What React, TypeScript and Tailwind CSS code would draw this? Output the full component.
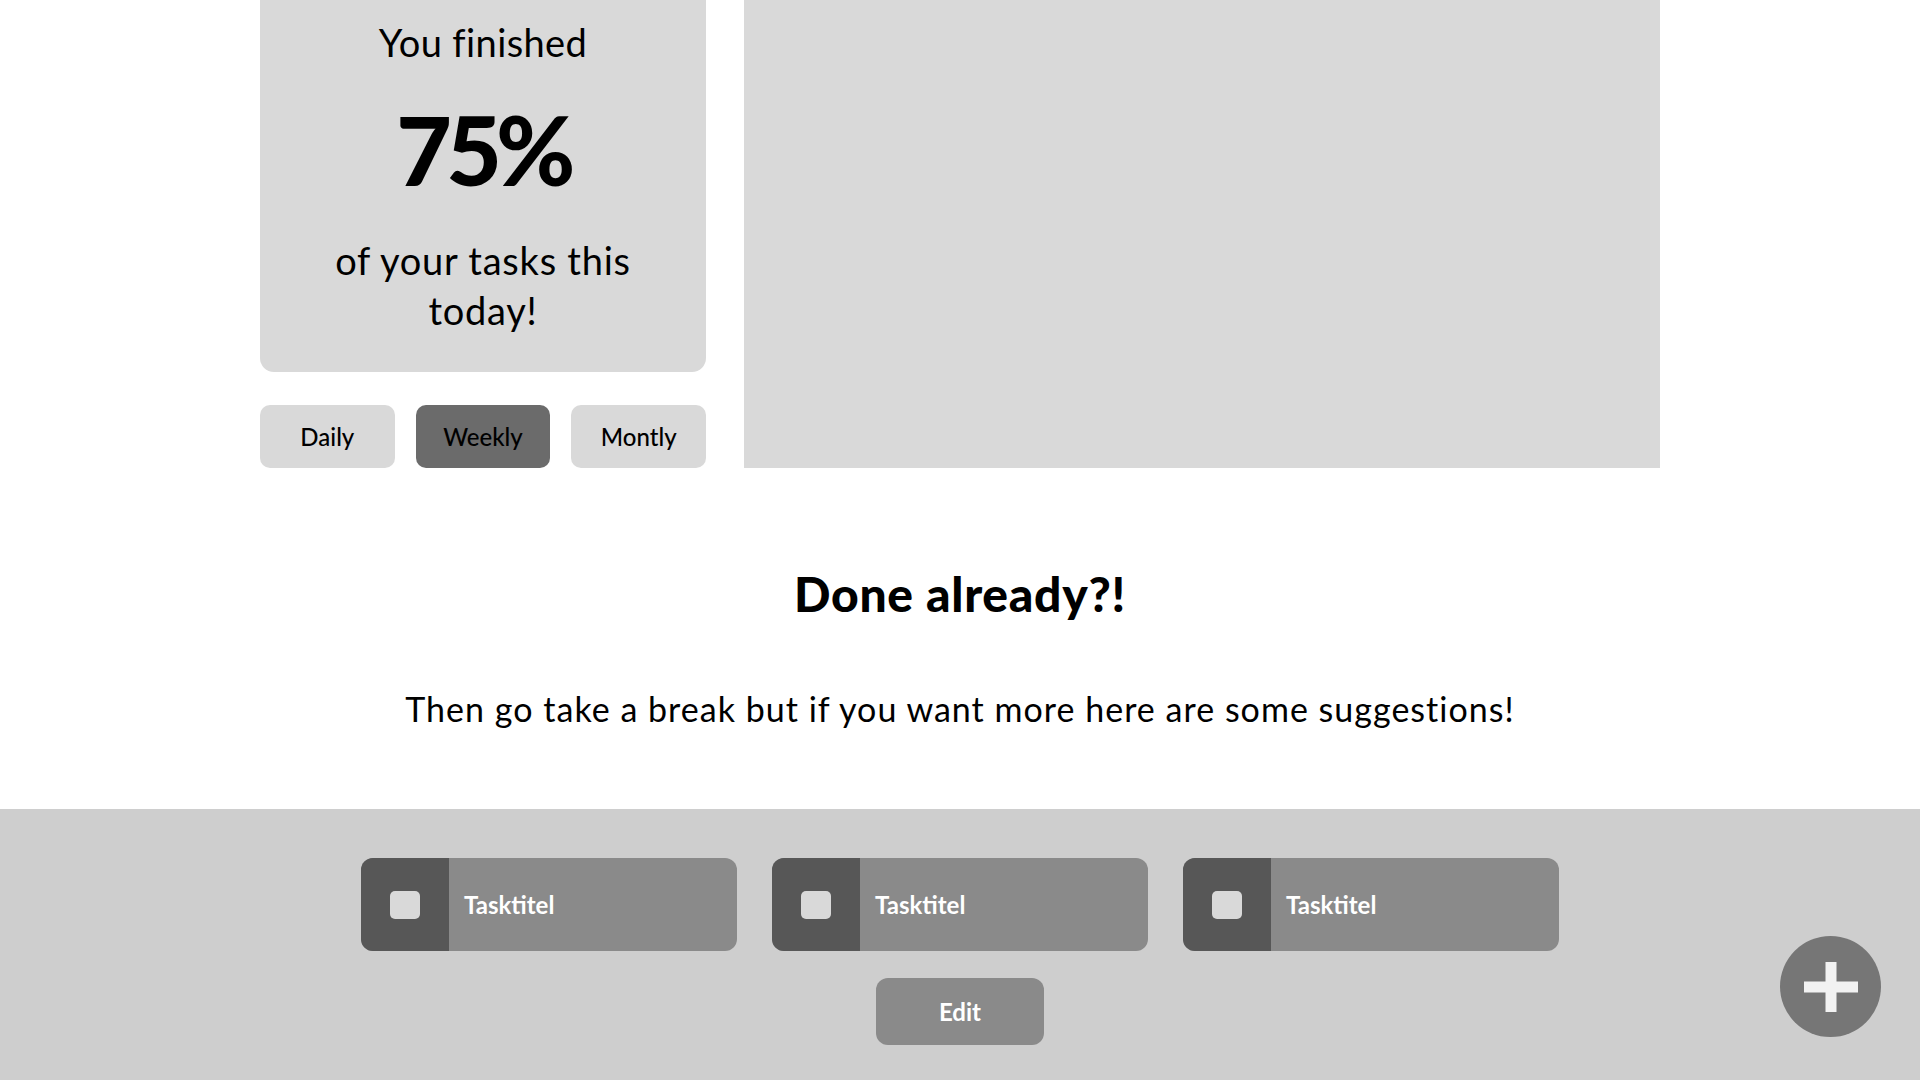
import { useState } from 'react';

type Range = 'Daily' | 'Weekly' | 'Montly';

const RANGES: Range[] = ['Daily', 'Weekly', 'Montly'];

const SUGGESTIONS = [
  { id: 1, title: 'Tasktitel' },
  { id: 2, title: 'Tasktitel' },
  { id: 3, title: 'Tasktitel' }
];

function TaskCard({ title }: { title: string }) {
  return (
    <div className="flex h-[93px] w-[376px] overflow-hidden rounded-[12px] bg-[#8a8a8a]">
      <div className="flex w-[88px] items-center justify-center bg-[#575757]">
        <div className="h-[28px] w-[30px] rounded-[5px] bg-[#d9d9d9]" />
      </div>
      <div className="flex flex-1 items-center pl-[15px] text-[24px] font-bold leading-none text-white">{title}</div>
    </div>
  );
}

export default function App() {
  const [range, setRange] = useState<Range>('Weekly');

  return (
    <div className="relative flex h-[1080px] w-full flex-col overflow-hidden bg-white font-['Lato',sans-serif] text-black">
      <div className="mx-auto flex w-[1400px] gap-[38px]">
        <div className="flex w-[446px] flex-col gap-[33px]">
          <div className="flex h-[372px] flex-col items-center rounded-b-[14px] bg-[#d9d9d9] pt-[18px] text-center">
            <p className="text-[38px] leading-[48px] tracking-[0.01em]">You finished</p>
            <p className="mt-[35px] text-[96px] font-black leading-none tracking-[-0.06em]">75%</p>
            <p className="mt-[38px] w-[340px] text-[38px] leading-[50px] tracking-[0.02em]">of your tasks this today!</p>
          </div>
          <div className="flex gap-[21px]">
            {RANGES.map((r) => (
              <button
                key={r}
                onClick={() => setRange(r)}
                className={
                  'h-[63px] flex-1 rounded-[10px] text-[24px] font-medium ' +
                  (r === range ? 'bg-[#6b6b6b]' : 'bg-[#d9d9d9]')
                }
              >
                {r}
              </button>
            ))}
          </div>
        </div>
        <div className="h-[468px] flex-1 bg-[#d9d9d9]" />
      </div>

      <h2 className="mt-[102px] text-center text-[48px] font-black leading-none tracking-[0.015em]">Done already?!</h2>
      <p className="mt-[74px] text-center text-[34px] leading-none tracking-[0.03em]">
        Then go take a break but if you want more here are some suggestions!
      </p>

      <div className="mt-auto flex h-[271px] flex-col items-center bg-[#cecece] pt-[49px]">
        <div className="flex gap-[35px]">
          {SUGGESTIONS.map((s) => (
            <TaskCard key={s.id} title={s.title} />
          ))}
        </div>
        <button className="mt-[27px] h-[67px] w-[168px] rounded-[12px] bg-[#8a8a8a] text-[24px] font-bold text-white">
          Edit
        </button>
      </div>

      <button className="absolute bottom-[43px] right-[39px] flex h-[101px] w-[101px] items-center justify-center rounded-full bg-[#767676]">
        <svg width="54" height="50" viewBox="0 0 54 50">
          <rect x="21.5" y="0" width="11" height="50" fill="#f2f2f2" />
          <rect x="0" y="19.5" width="54" height="11" fill="#f2f2f2" />
        </svg>
      </button>
    </div>
  );
}
